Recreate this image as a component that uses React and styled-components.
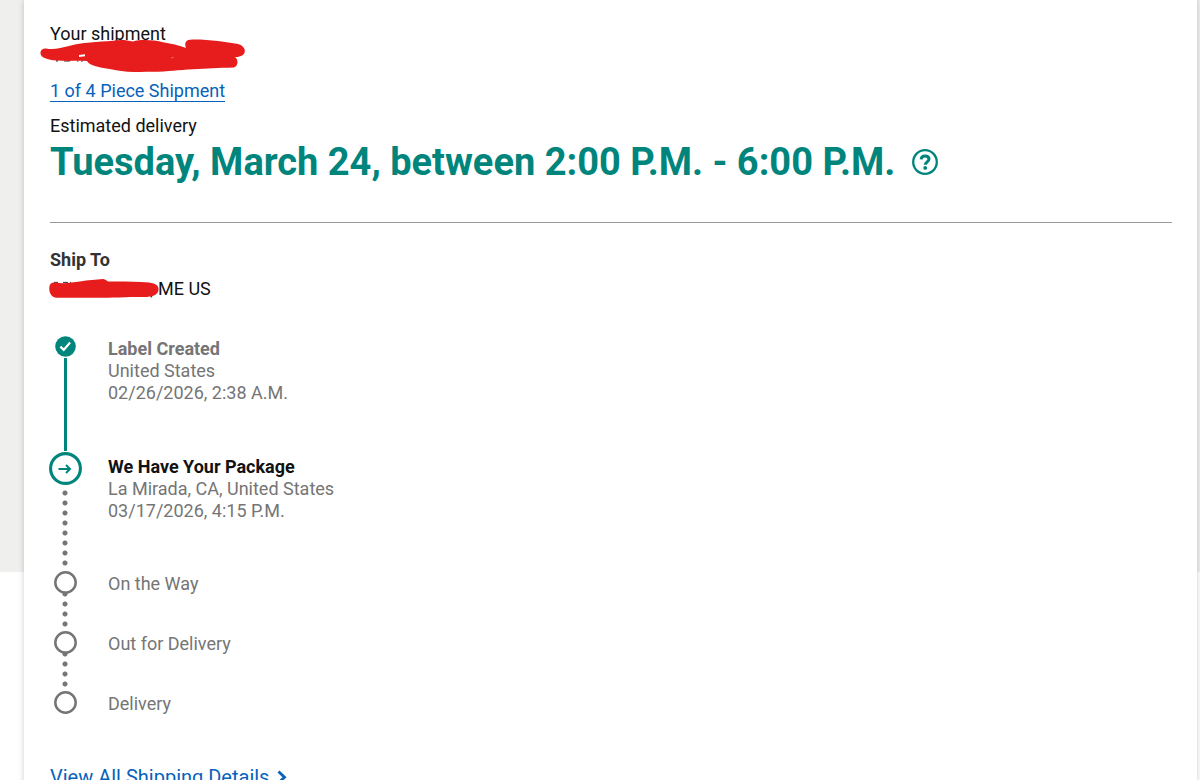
import styled, { createGlobalStyle, css } from "styled-components";

const colors = {
  teal: "#00857c",
  blue: "#0662bb",
  grey: "#757575",
  red: "#e71d1d",
};

const GlobalStyle = createGlobalStyle`
  * {
    box-sizing: border-box;
  }

  body {
    margin: 0;
    background: linear-gradient(#efefee, #efefee) no-repeat #fff;
    background-size: 100% 572px;
    color: #121212;
    font-family: Roboto, "Liberation Sans", sans-serif;
    font-size: 18px;
    line-height: 22px;
  }

  p,
  h1,
  h2,
  h3,
  ol {
    margin: 0;
    padding: 0;
  }
`;

const Card = styled.main`
  margin: 0 3px 0 24px;
  padding: 23px 25px 24px 26px;
  background: #fff;
  box-shadow: 0 0 6px rgba(0, 0, 0, 0.2);
`;

const Summary = styled.header`
  display: flex;
  flex-direction: column;
  align-items: flex-start;
  padding-bottom: 35px;
  border-bottom: 1px solid #999;
`;

const TrackingNumber = styled.div`
  position: relative;
  height: 36px;
`;

const Scribble = styled.svg`
  position: absolute;
  left: -10px;
  top: ${(props) => props.$top};
  overflow: visible;
`;

const PieceLink = styled.a`
  border-bottom: 1px solid ${colors.blue};
  color: ${colors.blue};
  line-height: 20px;
  text-decoration: none;
`;

const EstimateLabel = styled.p`
  margin-top: 13px;
`;

const Estimate = styled.div`
  display: flex;
  align-items: center;
  gap: 17px;
  color: ${colors.teal};

  h1 {
    font-size: 38px;
    font-weight: 700;
    line-height: 50px;
  }
`;

const HelpButton = styled.button`
  display: flex;
  padding: 0;
  border: 0;
  background: none;
  color: inherit;
  cursor: pointer;
`;

const ShipTo = styled.section`
  padding: 26px 0 36px;

  h2 {
    color: #333;
    font-size: 18px;
    font-weight: 700;
    line-height: 22px;
  }
`;

const Address = styled.p`
  position: relative;
  margin-top: 7px;
  padding-left: 100px;
`;

const Timeline = styled.ol`
  list-style: none;
`;

const StepItem = styled.li`
  display: grid;
  grid-template-columns: 30px 1fr;
  gap: 28px;
  min-height: ${(props) => props.$height};
  color: ${colors.grey};
`;

const Track = styled.div`
  display: flex;
  flex-direction: column;
  align-items: center;

  svg {
    flex: none;
  }
`;

const Rail = styled.span`
  flex: 1;
  ${(props) =>
    props.$kind === "solid"
      ? css`
          width: 3px;
          margin: 1px 0;
          background: ${colors.teal};
        `
      : css`
          width: 6px;
          margin: ${props.$kind === "long" ? "3px 0 4px" : "-5px 0 2px"};
          background: radial-gradient(circle, ${colors.grey} 2px, transparent 3px)
            top / 6px 10px repeat-y;
        `}
`;

const StepText = styled.div`
  padding-top: ${(props) => (props.$current ? "4px" : "2px")};

  h3 {
    color: ${(props) => (props.$current ? "#121212" : "inherit")};
    font-size: 18px;
    font-weight: ${(props) => (props.$pending ? 400 : 700)};
    line-height: 22px;
  }
`;

const DetailsLink = styled.a`
  display: inline-flex;
  align-items: center;
  gap: 8px;
  margin-top: 50px;
  color: ${colors.blue};
  font-size: 20px;
  line-height: 24px;
  text-decoration: none;
`;

const steps = [
  {
    title: "Label Created",
    place: "United States",
    time: "02/26/2026, 2:38 A.M.",
    state: "done",
    rail: "solid",
    height: "116px",
  },
  {
    title: "We Have Your Package",
    place: "La Mirada, CA, United States",
    time: "03/17/2026, 4:15 P.M.",
    state: "current",
    rail: "long",
    height: "119px",
  },
  { title: "On the Way", state: "pending", rail: "short", height: "60px" },
  { title: "Out for Delivery", state: "pending", rail: "short", height: "60px" },
  { title: "Delivery", state: "pending", height: "24px" },
];

const StepIcon = ({ state }) => {
  if (state === "done") {
    return (
      <svg width="21" height="21" viewBox="0 0 21 21" aria-hidden="true">
        <circle cx="10.5" cy="10.5" r="10.3" fill={colors.teal} />
        <path
          d="M5.4 10.6l3.3 3.3 6.4-7.4"
          fill="none"
          stroke="#fff"
          strokeWidth="2.2"
        />
      </svg>
    );
  }
  if (state === "current") {
    return (
      <svg width="33" height="33" viewBox="0 0 33 33" aria-hidden="true">
        <circle
          cx="16.5"
          cy="16.5"
          r="14.9"
          fill="#fff"
          stroke={colors.teal}
          strokeWidth="3.1"
        />
        <path
          d="M9.5 17h11.4M17 13l4 4-4 4"
          fill="none"
          stroke={colors.teal}
          strokeWidth="2"
        />
      </svg>
    );
  }
  return (
    <svg width="23" height="23" viewBox="0 0 23 23" aria-hidden="true">
      <circle
        cx="11.5"
        cy="11.5"
        r="10.2"
        fill="#fff"
        stroke={colors.grey}
        strokeWidth="2.5"
      />
    </svg>
  );
};

const Step = ({ step }) => (
  <StepItem $height={step.height}>
    <Track>
      <StepIcon state={step.state} />
      {step.rail && <Rail $kind={step.rail} />}
    </Track>
    <StepText
      $current={step.state === "current"}
      $pending={step.state === "pending"}
    >
      <h3>{step.title}</h3>
      {step.place && <p>{step.place}</p>}
      {step.time && <p>{step.time}</p>}
    </StepText>
  </StepItem>
);

const App = () => {
  return (
    <>
      <GlobalStyle />
      <Card>
        <Summary>
          <p>Your shipment</p>
          <TrackingNumber>
            <Scribble
              $top="-7px"
              width="206"
              height="34"
              viewBox="40 38 206 34"
              aria-hidden="true"
            >
              <path
                d="M56 60.9h2M64 61h6M77 61h1.5M81 61h2"
                stroke="#333"
                strokeWidth="1.2"
              />
              <path
                d="M46 48.5C54 50 61 48 69 46C82 42 98 42 113 40.7C119 39.5 126 39.5 133 41.5C140 39.5 152 39.5 164 42.5C173 44 181 46 186 48C184 42 186 39 194 39.5C211 39.5 226 42 238 44C246 46 247 54 241 56C239 57 236 57 235 57C239 60 238 66 234 67.5C218 68 207 68.3 193 69.3C178 70 169 71.7 152 71.8C139 72 126 72.2 116 70.2C103 67.5 90 67 87 61C76 60.5 67 61.3 57 60.5C51 60.5 47 59 42.5 57C39 54 40 48 46 48.5Z"
                fill={colors.red}
              />
              <path d="M79 55l6-.7v2l-6 .6z" fill="#fff" />
              <path d="M171 58l3-.6" stroke="#ee7474" strokeWidth=".8" />
            </Scribble>
          </TrackingNumber>
          <PieceLink href="#pieces">1 of 4 Piece Shipment</PieceLink>
          <EstimateLabel>Estimated delivery</EstimateLabel>
          <Estimate>
            <h1>Tuesday, March 24, between 2:00 P.M. - 6:00 P.M.</h1>
            <HelpButton type="button" aria-label="Help">
              <svg width="26" height="26" viewBox="0 0 26 26" fill="none">
                <circle
                  cx="13"
                  cy="13"
                  r="11.8"
                  stroke="currentColor"
                  strokeWidth="2.3"
                />
                <path
                  d="M9.2 10.4C9.3 7.9 10.9 6.9 13.1 6.9C15.4 6.9 17 8.1 17 10.1C17 12.9 13.3 12.8 13.3 15.8"
                  stroke="currentColor"
                  strokeWidth="3"
                />
                <circle cx="13.2" cy="18.9" r="1.9" fill="currentColor" />
              </svg>
            </HelpButton>
          </Estimate>
        </Summary>

        <ShipTo>
          <h2>Ship To</h2>
          <Address>
            , ME US
            <Scribble
              $top="0"
              width="120"
              height="22"
              viewBox="40 278 120 22"
              aria-hidden="true"
            >
              <path
                d="M54 282.4h4M63 282.4h5M70 282.4h1M75 282.6h2"
                stroke="#333"
                strokeWidth="1"
              />
              <path
                d="M55 282.5C64 284 72 282.5 80 281.5C88 280 96 279.6 103 279C106 279.5 107 281 108 281.5C122 281.3 136 281.5 149 282.6C156 283.5 159 286 158.5 290C158 295 152 297 144 297C125 297 113 297.8 96 297.8H56C51 297 49 292 49.3 288C49.5 284 51 282.5 55 282.5Z"
                fill={colors.red}
              />
            </Scribble>
          </Address>
        </ShipTo>

        <Timeline>
          {steps.map((step) => (
            <Step key={step.title} step={step} />
          ))}
        </Timeline>

        <DetailsLink href="#details">
          View All Shipping Details
          <svg
            width="10"
            height="14"
            viewBox="0 0 10 14"
            fill="none"
            aria-hidden="true"
          >
            <path d="M1.5 1.5L7.5 7.2l-6 5.6" stroke="currentColor" strokeWidth="2.8" />
          </svg>
        </DetailsLink>
      </Card>
    </>
  );
};

export default App;
